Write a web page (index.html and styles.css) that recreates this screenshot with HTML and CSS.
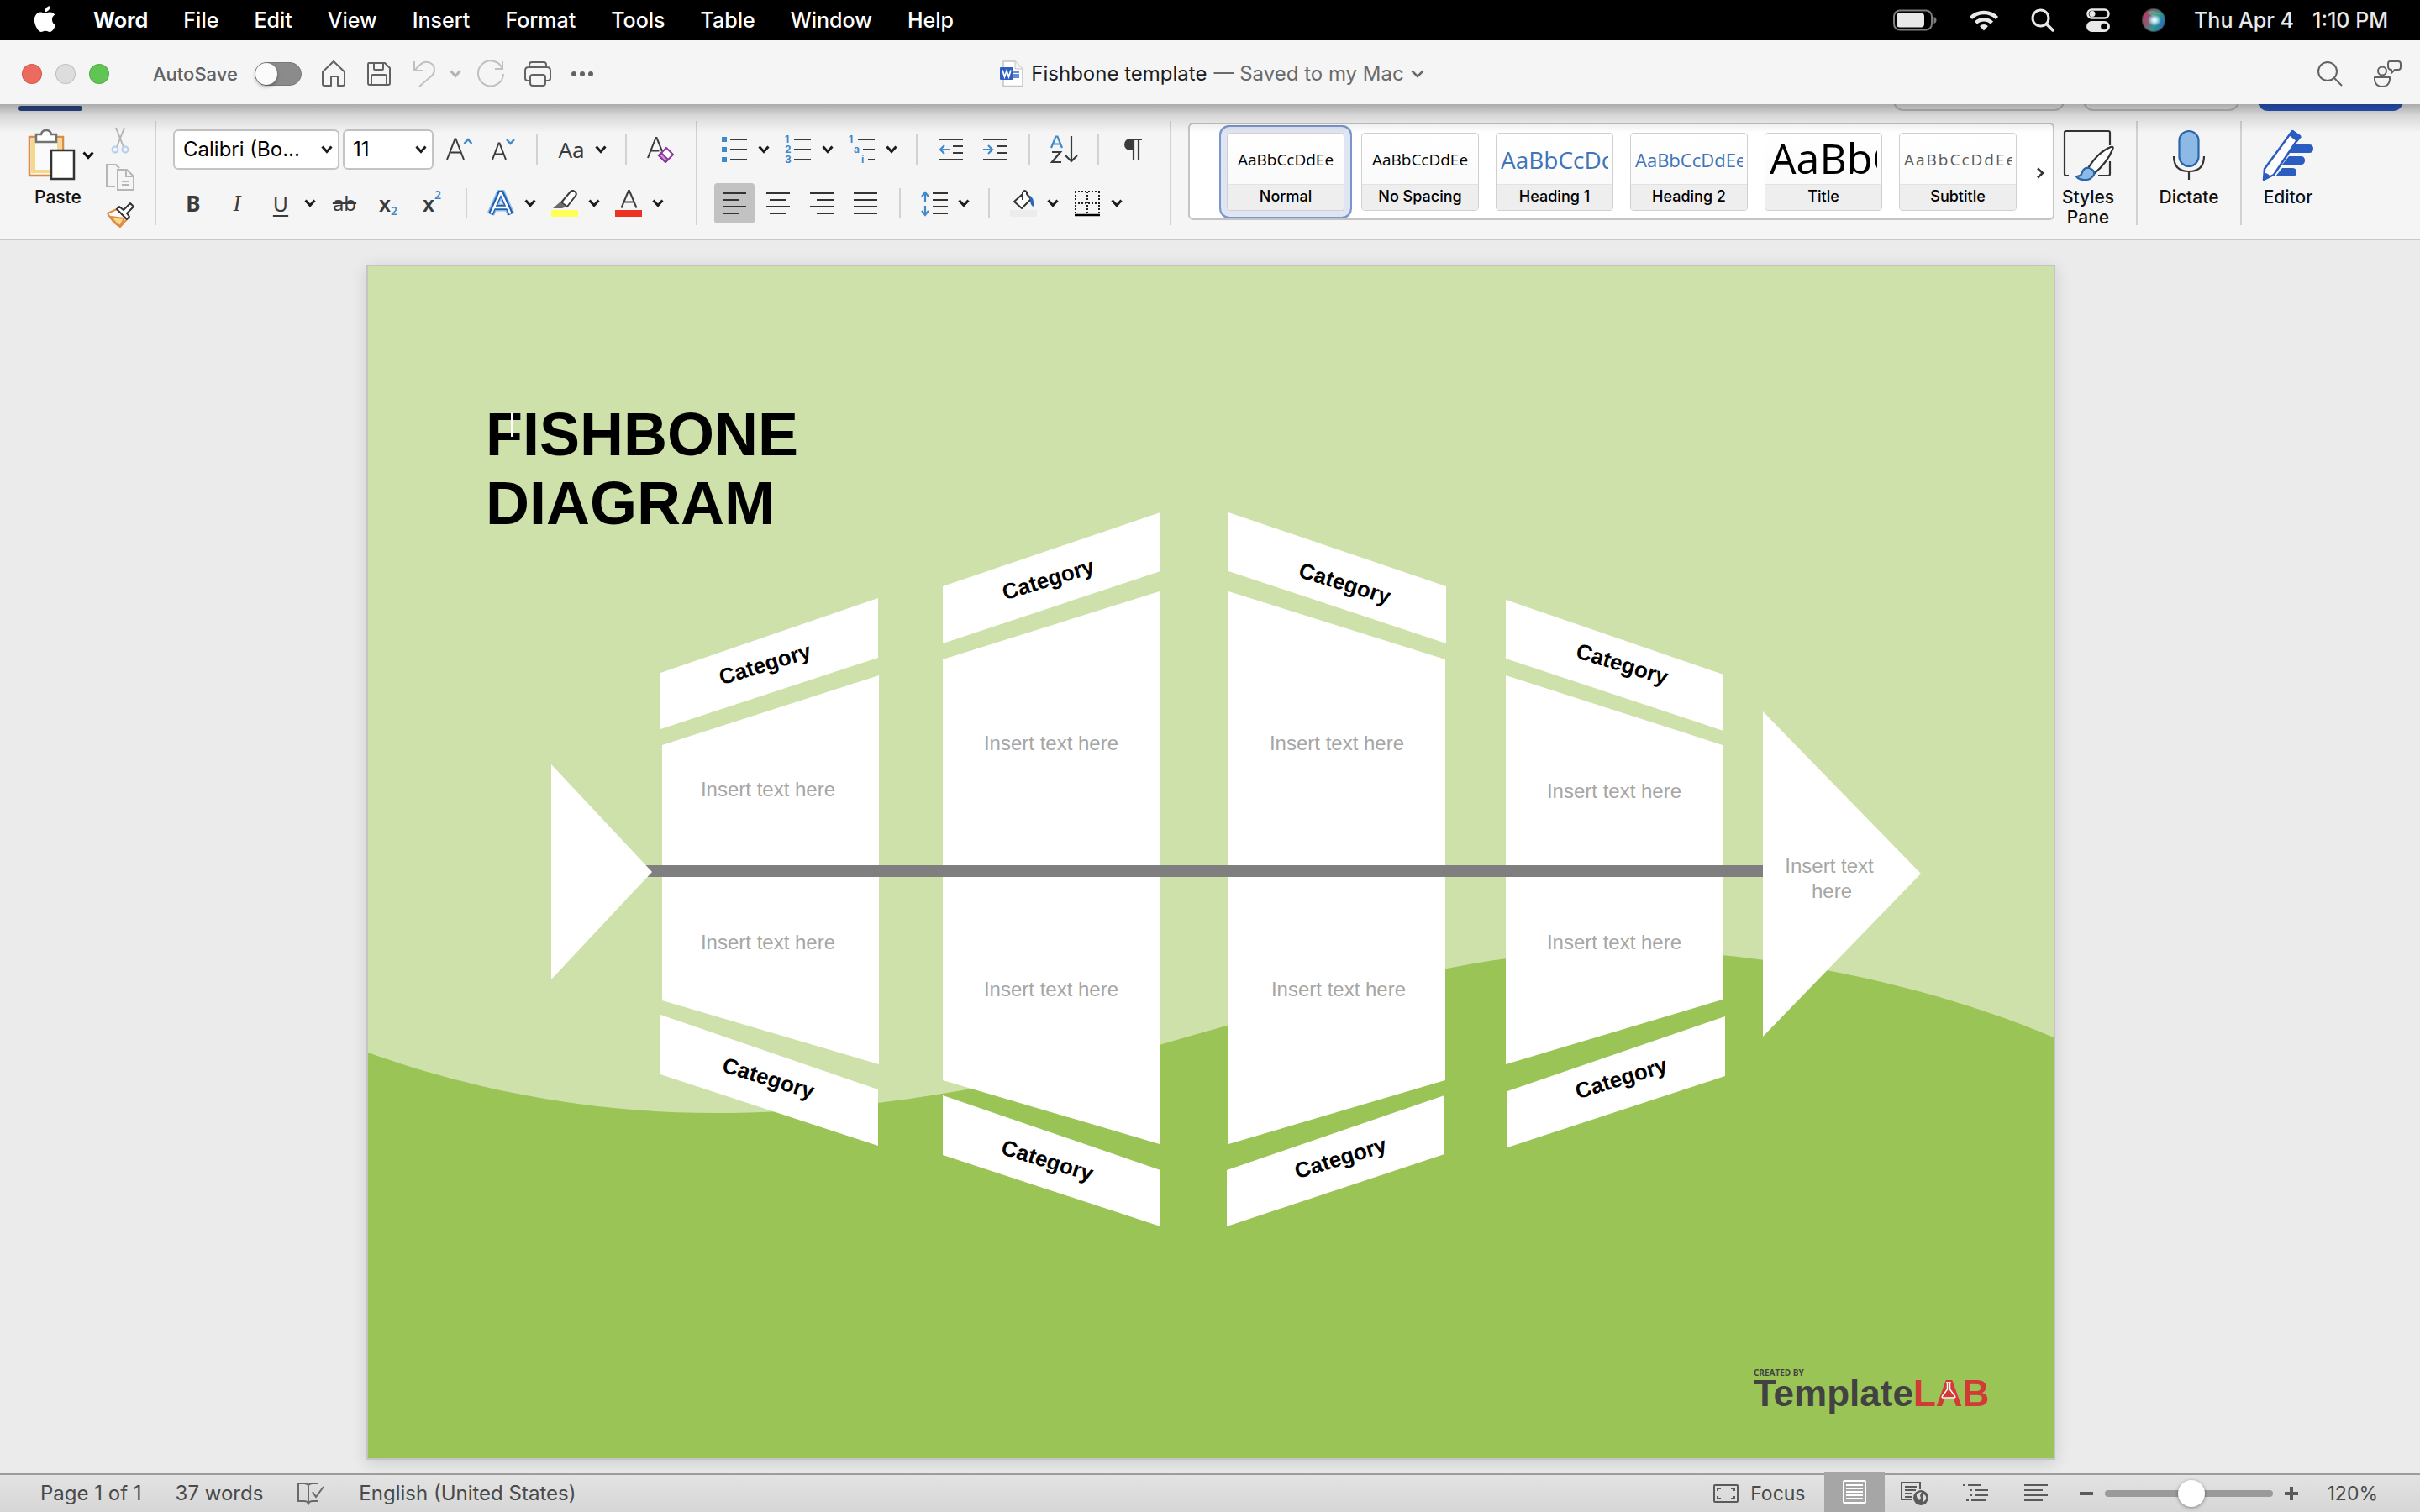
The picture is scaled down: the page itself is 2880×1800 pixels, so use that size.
FILE: index.html
```html
<!DOCTYPE html>
<html lang="en">
<head>
<meta charset="utf-8">
<title>Fishbone template</title>
<link rel="stylesheet" href="styles.css">
</head>
<body>
<svg class="defs" aria-hidden="true">
  <symbol id="chev" viewBox="0 0 14 10"><path d="M1.500 1.500 7 7.500l5.500-6" fill="none" stroke="currentColor" stroke-width="3"/></symbol>
</svg>

<nav class="menubar" aria-label="Menu bar">
  <button class="apple" aria-label="Apple"><svg width="31" height="31" viewBox="0 0 24 24" fill="#fff"><path d="M12.152 6.896c-.948 0-2.415-1.078-3.96-1.04-2.04.027-3.91 1.183-4.961 3.014-2.117 3.675-.546 9.103 1.519 12.09 1.013 1.454 2.208 3.09 3.792 3.039 1.52-.065 2.09-.987 3.935-.987 1.831 0 2.35.987 3.96.948 1.637-.026 2.676-1.48 3.676-2.948 1.156-1.688 1.636-3.325 1.662-3.415-.039-.013-3.182-1.221-3.22-4.857-.026-3.04 2.48-4.494 2.597-4.559-1.429-2.09-3.623-2.324-4.39-2.376-2-.156-3.675 1.09-4.61 1.09zM15.53 3.83c.843-1.012 1.4-2.427 1.245-3.83-1.207.052-2.662.805-3.532 1.818-.78.896-1.454 2.338-1.273 3.714 1.338.104 2.715-.688 3.559-1.701"/></svg></button>
  <button class="app-name">Word</button>
  <button>File</button>
  <button>Edit</button>
  <button>View</button>
  <button>Insert</button>
  <button>Format</button>
  <button>Tools</button>
  <button>Table</button>
  <button>Window</button>
  <button>Help</button>
  <div class="tray">
    <svg width="52" height="26" viewBox="0 0 52 26"><rect x="1" y="1.500" width="45" height="23" rx="7" fill="none" stroke="#7d7d7d" stroke-width="2"/><rect x="4" y="4.500" width="33" height="17" rx="4" fill="#e8e8e8"/><path d="M48.500 9v8q3-1 3-4t-3-4z" fill="#7d7d7d"/></svg>
    <svg width="36" height="26" viewBox="0 0 36 26" fill="none" stroke="#e8e8e8" stroke-width="4.500"><path d="M2.500 10.500a22 22 0 0 1 31 0M8.500 16.200a13.500 13.500 0 0 1 19 0"/><path d="M18 25.500l-5-5.500a7.500 7.500 0 0 1 10 0z" fill="#e8e8e8" stroke="none"/></svg>
    <svg width="28" height="28" viewBox="0 0 28 28" fill="none" stroke="#e8e8e8" stroke-width="3"><circle cx="11.500" cy="11.500" r="9.500"/><path d="M18.500 18.500l7.500 7.500" stroke-width="3.500" stroke-linecap="round"/></svg>
    <svg width="28" height="28" viewBox="0 0 28 28"><rect x="1.500" y="1.500" width="25" height="10" rx="5" fill="none" stroke="#e8e8e8" stroke-width="2.500"/><circle cx="7" cy="6.500" r="3.500" fill="#e8e8e8"/><rect x="0" y="15" width="28" height="13" rx="6.500" fill="#e8e8e8"/><circle cx="21" cy="21.500" r="3.800" fill="#000"/></svg>
    <svg width="28" height="28" viewBox="0 0 28 28"><defs><linearGradient id="siri" x1="0" y1=".3" x2="1" y2=".8"><stop offset="0" stop-color="#c8315c"/><stop offset=".4" stop-color="#6d6f7e"/><stop offset=".6" stop-color="#2f9a8e"/><stop offset="1" stop-color="#2a62c8"/></linearGradient><radialGradient id="glow"><stop offset="0" stop-color="#fff"/><stop offset=".35" stop-color="#bfe9f5"/><stop offset="1" stop-color="#bfe9f5" stop-opacity="0"/></radialGradient></defs><circle cx="14" cy="14" r="14" fill="#3a4a4c"/><circle cx="14" cy="14" r="13" fill="url(#siri)"/><path d="M6 5q9-5 16 3-6-2-10 1z" fill="#4fb98c" opacity=".7"/><ellipse cx="15" cy="14" rx="8" ry="7" fill="url(#glow)"/></svg>
    <time class="clock"><span>Thu Apr 4</span><span>1:10 PM</span></time>
  </div>
</nav>

<header class="titlebar">
  <div class="title-start">
    <div class="lights"><button class="light red" aria-label="Close"></button><button class="light gray" aria-label="Minimise"></button><button class="light green" aria-label="Zoom window"></button></div>
    <div class="quick">
      <label class="autosave">AutoSave <input type="checkbox" role="switch" class="switch"></label>
      <button aria-label="Home"><svg width="32" height="32" viewBox="0 0 32 32" fill="none" stroke="#626262" stroke-width="2" stroke-linejoin="round"><path d="M3 13.500 16 1l13 12.500V28q0 2-2 2h-6V19h-8v11H5q-2 0-2-2z"/></svg></button>
      <button aria-label="Save"><svg width="32" height="32" viewBox="0 0 32 32" fill="none" stroke="#626262" stroke-width="2" stroke-linejoin="round"><path d="M4 3h19l6 6v18q0 2-2 2H5q-2 0-2-2V5q0-2 1-2zM10 3v7q0 1 1 1h9q1 0 1-1V3M7 29V19q0-2 2-2h14q2 0 2 2v10"/></svg></button>
      <div class="undo"><button aria-label="Undo"><svg width="32" height="32" viewBox="0 0 32 32" fill="none" stroke="#c0c0c0" stroke-width="2"><path d="M4 1v11h11M4 12l7-7C17-1 28 2 28 11c0 3-1 5-3 7L10 31"/></svg></button><button class="pale" aria-label="Undo history"><svg width="14" height="10"><use href="#chev"/></svg></button></div>
      <button aria-label="Redo"><svg width="34" height="34" viewBox="0 0 34 34" fill="none" stroke="#c0c0c0" stroke-width="2"><path d="M31 2v9h-9M31 11A15 15 0 1 0 32 17"/></svg></button>
      <button aria-label="Print"><svg width="34" height="32" viewBox="0 0 34 32" fill="none" stroke="#626262" stroke-width="2"><path d="M8 24H5q-3 0-3-3v-9q0-4 4-4h22q4 0 4 4v9q0 3-3 3h-3M7 8V5q0-3 3-3h14q3 0 3 3v3"/><rect x="8" y="17" width="18" height="13" rx="3"/></svg></button>
      <button aria-label="More"><svg width="28" height="8" viewBox="0 0 28 8" fill="#626262"><circle cx="4" cy="4" r="3"/><circle cx="14" cy="4" r="3"/><circle cx="24" cy="4" r="3"/></svg></button>
    </div>
  </div>
  <button class="doc-title">
    <svg width="30" height="32" viewBox="0 0 30 32"><path d="M5 1h14l9 9v20.500H5z" fill="#fff" stroke="#c4c4c4" stroke-width="1.500"/><path d="M19 1v9h9" fill="#f2f2f2" stroke="#c4c4c4"/><path d="M16 14h8m-8 3h8m-8 3h8" stroke="#3469c8" stroke-width="1.500"/><rect x="1" y="8" width="16" height="15" rx="1" fill="#2f5fc4"/><path d="M4 11.500l2.500 8L9 12.500l2.500 7 2.500-8" fill="none" stroke="#fff" stroke-width="1.800"/></svg>
    <span>Fishbone template</span><span class="saved">— Saved to my Mac</span>
    <svg class="saved" width="16" height="12" viewBox="0 0 16 12"><path d="M1.500 2.500 8 9l6.500-6.500" fill="none" stroke="currentColor" stroke-width="2.500"/></svg>
  </button>
  <div class="title-tools">
    <button aria-label="Search"><svg width="30" height="30" viewBox="0 0 30 30" fill="none" stroke="#626262" stroke-width="2"><circle cx="12" cy="12" r="11"/><path d="M20 20l9 9"/></svg></button>
    <button aria-label="Share"><svg width="34" height="34" viewBox="0 0 34 34" fill="none" stroke="#626262" stroke-width="2"><circle cx="11" cy="13.500" r="5"/><path d="M2 21h18v3q-1 8-9 8t-9-8zM20 2h10q3 0 3 3v4q0 3-3 3h-4l-4 4v-4q-4 0-4-4V5q0-3 2-3z" stroke-linejoin="round"/></svg></button>
  </div>
</header>

<div class="tabs" aria-hidden="true"><i class="tab-mark"></i><i class="pill one"></i><i class="pill two"></i><i class="pill share"></i></div>

<section class="ribbon" aria-label="Home">
  <div class="group clipboard">
    <button class="big paste">
      <span class="paste-icon"><svg width="58" height="62" viewBox="0 0 58 62"><path d="M12 9H2v46h24" fill="none" stroke="#e08a42" stroke-width="2.500"/><path d="M30 9h12v16" fill="none" stroke="#e08a42" stroke-width="2.500"/><path d="M4 11h36v13H27v28H4z" fill="#f4d98b"/><path d="M9 15h26v9h-9v24H9z" fill="#fafafa"/><path d="M10 6h6q1-5 6-5t6 5h6v9H10z" fill="#fff" stroke="#737373" stroke-width="2.500"/><rect x="28" y="25" width="27" height="34" fill="#fff" stroke="#333" stroke-width="2.500"/></svg><svg width="14" height="10"><use href="#chev"/></svg></span>
      <span>Paste</span>
    </button>
    <div class="stack">
      <button aria-label="Cut"><svg width="34" height="34" viewBox="0 0 34 34" fill="none" stroke-width="2"><path d="M12 2l9 23M22 2l-9 23" stroke="#b6b6b6"/><circle cx="11" cy="28" r="3.500" stroke="#afcfec"/><circle cx="23" cy="28" r="3.500" stroke="#afcfec"/></svg></button>
      <button aria-label="Copy"><svg width="34" height="34" viewBox="0 0 34 34" fill="none" stroke="#b6b6b6" stroke-width="2"><path d="M11 28H1V2h11l4 4M14 8h11l8 8v16H14zM24 8v8h9M19 22h9M19 26h9"/></svg></button>
      <button aria-label="Format painter"><svg width="34" height="34" viewBox="0 0 34 34" stroke-linejoin="round" stroke-width="2"><path d="M2 16l11-5 12 12-8 9q-8-4-15-16z" fill="#fff" stroke="#e08a42"/><path d="M6 20l16 2-5 9q-6-3-11-11z" fill="#f4d98b" stroke="#e08a42"/><path d="M13 11l3-3 5 4 8-8 4 4-8 8 3 4-3 3z" fill="#fff" stroke="#333"/></svg></button>
    </div>
  </div>

  <div class="group font">
    <div class="row">
      <div class="combos">
        <span class="combo"><select class="face" aria-label="Font"><option>Calibri (Bo...</option></select><svg width="14" height="10"><use href="#chev"/></svg></span>
        <span class="combo"><select class="size" aria-label="Font size"><option>11</option></select><svg width="14" height="10"><use href="#chev"/></svg></span>
      </div>
      <div class="tools">
        <button class="tool" aria-label="Increase font size"><svg width="32" height="32" viewBox="0 0 32 32"><path d="M2 28 11.500 3.500h1L22 28M5.500 19.500h13" fill="none" stroke="#3b3b3b" stroke-width="2"/><path d="M22.500 9l4.500-5 4.500 5" fill="none" stroke="#3f8acb" stroke-width="2.500"/></svg></button>
        <button class="tool" aria-label="Decrease font size"><svg width="32" height="32" viewBox="0 0 32 32"><path d="M4 28l7.500-19.500h1L20 28M7 21.500h10" fill="none" stroke="#3b3b3b" stroke-width="2"/><path d="M21 4l4.500 5L30 4" fill="none" stroke="#3f8acb" stroke-width="2.500"/></svg></button>
        <i class="rule"></i>
        <div class="split"><button class="tool case">Aa</button><button aria-label="Case options"><svg width="14" height="10"><use href="#chev"/></svg></button></div>
        <i class="rule"></i>
        <button class="tool" aria-label="Clear formatting"><svg width="32" height="32" viewBox="0 0 32 32"><path d="M1 26 10.500 2h1L18 18M4.500 17.500h10" fill="none" stroke="#3b3b3b" stroke-width="2"/><path d="M23 14l8 8-9 9-8-8z" fill="#fff" stroke="#8b3a9c" stroke-width="2"/><path d="M17 20l8 8-3 3-8-8z" fill="#cf9ad8" stroke="#8b3a9c" stroke-width="2"/></svg></button>
      </div>
    </div>
    <div class="row tools lower">
      <button class="tool bold">B</button>
      <button class="tool italic">I</button>
      <div class="split"><button class="tool underline">U</button><button aria-label="Underline options"><svg width="14" height="10"><use href="#chev"/></svg></button></div>
      <button class="tool strike">ab</button>
      <button class="tool script">x<sub>2</sub></button>
      <button class="tool script">x<sup>2</sup></button>
      <i class="rule"></i>
      <div class="split"><button class="tool" aria-label="Text effects"><svg width="34" height="32" viewBox="0 0 34 32" fill="none"><path d="M5 29 16 4h2l11 25M10 21h14" stroke="#8fbce8" stroke-width="9"/><path d="M5 29 16 4h2l11 25M10 21h14" stroke="#1f5fb0" stroke-width="6"/><path d="M5.500 28.500 16.500 4h1l11 24.500M9 21h16" stroke="#fff" stroke-width="2.500"/></svg></button><button aria-label="Text effects options"><svg width="14" height="10"><use href="#chev"/></svg></button></div>
      <div class="split"><button class="tool" aria-label="Highlight"><svg width="32" height="32" viewBox="0 0 32 32"><path d="M12 15 23 2q2-2 5 0t1 5L19 20z" fill="#fff" stroke="#3b3b3b" stroke-width="2"/><path d="M2 22l8-7 8 5-5 2z" fill="#6a6a6a"/><path d="M0 24h32v8H0z" fill="#ff5"/></svg></button><button aria-label="Highlight options"><svg width="14" height="10"><use href="#chev"/></svg></button></div>
      <div class="split"><button class="tool" aria-label="Font colour"><svg width="32" height="32" viewBox="0 0 32 32"><path d="M7.500 21.500 16 1h1l8.500 20.500M11 14.500h11" fill="none" stroke="#3b3b3b" stroke-width="2"/><path d="M0 24h32v8H0z" fill="#ea3323"/></svg></button><button aria-label="Font colour options"><svg width="14" height="10"><use href="#chev"/></svg></button></div>
    </div>
  </div>

  <div class="group para">
    <div class="row tools">
      <div class="split"><button class="tool" aria-label="Bullets"><svg width="32" height="32" viewBox="0 0 32 32"><path d="M1 1h6v6H1zM1 13h6v6H1zM1 25h6v6H1z" fill="#3f8acb"/><path d="M11 4h20M11 16h20M11 28h20" stroke="#3b3b3b" stroke-width="2"/></svg></button><button aria-label="Bullet options"><svg width="14" height="10"><use href="#chev"/></svg></button></div>
      <div class="split"><button class="tool" aria-label="Numbering"><svg class="digits" width="32" height="32" viewBox="0 0 32 32"><text x="0" y="8">1</text><text x="0" y="20">2</text><text x="0" y="32">3</text><path d="M11 4h20M11 16h20M11 28h20" stroke="#3b3b3b" stroke-width="2"/></svg></button><button aria-label="Numbering options"><svg width="14" height="10"><use href="#chev"/></svg></button></div>
      <div class="split"><button class="tool" aria-label="Multilevel list"><svg class="digits" width="32" height="32" viewBox="0 0 32 32"><text x="0" y="8">1</text><text x="6" y="20">a</text><text x="15" y="32">i</text><path d="M11 4h20M17 16h14M23 28h8" stroke="#3b3b3b" stroke-width="2"/></svg></button><button aria-label="Multilevel options"><svg width="14" height="10"><use href="#chev"/></svg></button></div>
      <i class="rule"></i>
      <button class="tool" aria-label="Decrease indent"><svg width="32" height="32" viewBox="0 0 32 32" fill="none" stroke="#3b3b3b" stroke-width="2"><path d="M2 4h28M18 12h12M18 20h12M2 28h28"/><path d="M14 16H3m5-5-5 5 5 5" stroke="#3f8acb" stroke-width="2.200"/></svg></button>
      <button class="tool" aria-label="Increase indent"><svg width="32" height="32" viewBox="0 0 32 32" fill="none" stroke="#3b3b3b" stroke-width="2"><path d="M2 4h28M18 12h12M18 20h12M2 28h28"/><path d="M2 16h11m-5-5 5 5-5 5" stroke="#3f8acb" stroke-width="2.200"/></svg></button>
      <i class="rule"></i>
      <button class="tool" aria-label="Sort"><svg width="34" height="34" viewBox="0 0 34 34" fill="none" stroke-width="2.200"><path d="M2 15 7.500 1.500h2L15 15M4 10.500h9" stroke="#3f8acb"/><path d="M3 20h10L3 32h11M26 1v30m-7-7 7 7 7-7" stroke="#3b3b3b"/></svg></button>
      <i class="rule"></i>
      <button class="tool" aria-label="Show formatting marks"><svg width="24" height="26" viewBox="0 0 24 26"><path d="M10 1h13M13 1v24M19 1v24" stroke="#3b3b3b" stroke-width="2.200"/><path d="M13 0v14H9A7 7 0 0 1 9 0z" fill="#3b3b3b"/></svg></button>
    </div>
    <div class="row tools">
      <button class="tool active" aria-label="Align left"><svg width="32" height="32" viewBox="0 0 32 32"><path d="M2 4h28M2 12h20M2 20h28M2 28h20" stroke="#333" stroke-width="2"/></svg></button>
      <button class="tool" aria-label="Centre"><svg width="32" height="32" viewBox="0 0 32 32"><path d="M2 4h28M6 12h20M2 20h28M6 28h20" stroke="#333" stroke-width="2"/></svg></button>
      <button class="tool" aria-label="Align right"><svg width="32" height="32" viewBox="0 0 32 32"><path d="M2 4h28M10 12h20M2 20h28M10 28h20" stroke="#333" stroke-width="2"/></svg></button>
      <button class="tool" aria-label="Justify"><svg width="32" height="32" viewBox="0 0 32 32"><path d="M2 4h28M2 12h28M2 20h28M2 28h28" stroke="#333" stroke-width="2"/></svg></button>
      <i class="rule"></i>
      <div class="split"><button class="tool" aria-label="Line spacing"><svg width="32" height="32" viewBox="0 0 32 32" fill="none"><path d="M14 4h18M14 12h18M14 20h18M14 28h18" stroke="#333" stroke-width="2"/><path d="M5 14V4M1 8l4-5 4 5M5 19v10M1 25l4 5 4-5" stroke="#3f8acb" stroke-width="2.200"/></svg></button><button aria-label="Line spacing options"><svg width="14" height="10"><use href="#chev"/></svg></button></div>
      <i class="rule"></i>
      <div class="split"><button class="tool" aria-label="Shading"><svg width="32" height="32" viewBox="0 0 32 32"><path d="M15 5 5 14l9 8 11-11-5-6V3q-2-4-5 0v9" fill="#fff" stroke="#333" stroke-width="2" stroke-linejoin="round"/><path d="M22 6q7 2 6 14-4-1-4-9z" fill="#2b66b8"/><path d="M0 24h32v8H0z" fill="#ececec"/></svg></button><button aria-label="Shading options"><svg width="14" height="10"><use href="#chev"/></svg></button></div>
      <div class="split"><button class="tool" aria-label="Borders"><svg width="32" height="32" viewBox="0 0 32 32" fill="none" stroke="#222" stroke-width="2"><path d="M1 2h30M1 16h30M2 2v26M16 2v26M30 2v26" stroke-dasharray="2 2"/><path d="M1 30h30" stroke="#000" stroke-width="2.500"/></svg></button><button aria-label="Border options"><svg width="14" height="10"><use href="#chev"/></svg></button></div>
    </div>
  </div>

  <div class="group styles">
    <div class="gallery">
      <button class="style selected"><span class="sample">AaBbCcDdEe</span><span class="name">Normal</span></button>
      <button class="style"><span class="sample">AaBbCcDdEe</span><span class="name">No Spacing</span></button>
      <button class="style"><span class="sample h1">AaBbCcDdEe</span><span class="name">Heading 1</span></button>
      <button class="style"><span class="sample h2">AaBbCcDdEe</span><span class="name">Heading 2</span></button>
      <button class="style"><span class="sample title">AaBbCcDdEe</span><span class="name">Title</span></button>
      <button class="style"><span class="sample subtitle">AaBbCcDdEe</span><span class="name">Subtitle</span></button>
      <button class="next" aria-label="More styles"><svg width="10" height="14" viewBox="0 0 10 14"><path d="M2 1.500 8 7l-6 5.500" fill="none" stroke="#333" stroke-width="2.500"/></svg></button>
    </div>
    <button class="big pane"><svg width="62" height="62" viewBox="0 0 62 62" fill="none"><path d="M8 55H5q-2 0-2-2V4q0-2 2-2h50q2 0 2 2v15M57 38v15q0 2-2 2H43" stroke="#333" stroke-width="2.200"/><path d="M31 46Q44 26 58 21q4-1 2 3-6 15-21 28z" fill="#fff" stroke="#333" stroke-width="2.200"/><path d="M17 56q6 0 7-5 2-6 8-5 7 2 6 8-4 7-12 6-6 0-9-4z" fill="#8db9e6" stroke="#2b66a8" stroke-width="2.200"/></svg><span>Styles<br>Pane</span></button>
  </div>
  <div class="group dictate"><button class="big"><svg width="40" height="62" viewBox="0 0 40 62" fill="none" stroke-width="2.200"><rect x="8.500" y="2" width="23" height="42" rx="11.500" fill="#8db9e6" stroke="#2b66a8"/><path d="M2 32q0 18 18 18t18-18M20 50v10" stroke="#333"/></svg><span>Dictate</span></button></div>
  <div class="group editor"><button class="big"><svg width="62" height="62" viewBox="0 0 62 62"><path d="M38 18h18q5 0 5 5t-5 5H32M32 32h14q5 0 5 5t-5 5H24M24 46h12q5 0 5 5t-5 5H16" fill="#2b5cc0"/><path d="M3 47 36 2l9 6L14 54 2 60z" fill="#fff" stroke="#2b5cc0" stroke-width="2.500" stroke-linejoin="round"/><path d="M32 7l5-6 10 8-5 6zM1 61l2-9q5 0 7 5z" fill="#2b5cc0"/></svg><span>Editor</span></button></div>
</section>

<main class="workspace">
  <article class="page">
    <svg class="canvas" viewBox="438 317 2006 1419">
      <rect x="438" y="317" width="2006" height="1419" fill="#cee1aa"/>
      <path d="M438 1253C560 1297 700 1325 850 1325C1050 1325 1240 1285 1421 1232C1600 1180 1760 1131 1930 1131C2100 1131 2290 1170 2444 1235V1736H438Z" fill="#9ac456"/>
      <g class="heading"><text x="578" y="542">FISHBONE</text><text x="578" y="624">DIAGRAM</text></g>
      <path d="M609 490v30" stroke="#fff" stroke-width="2"/>
      <g fill="#fff">
        <path d="M786 801 1045 712V783L786 868zM788 887 1046 804V1267L788 1191zM786 1208 1045 1297V1364L786 1279z"/>
        <path d="M1122 698 1381 610V680L1122 766zM1122 785 1380 704V1362L1122 1286zM1122 1304 1381 1393V1460L1122 1375z"/>
        <path d="M1462 610 1721 698V766L1462 680zM1462 704 1720 785V1286L1462 1362zM1460 1393 1719 1304V1374L1460 1460z"/>
        <path d="M1792 714 2051 803V870L1792 784zM1792 804 2050 887V1190L1792 1267zM1794 1299 2053 1210V1281L1794 1366z"/>
      </g>
      <path d="M760 1030H2100V1044H760z" fill="#7f7f7f"/>
      <path d="M656 910 776 1038 656 1166zM2098 847 2286 1040 2098 1234z" fill="#fff"/>
      <g class="category">
        <text transform="translate(913 799) rotate(-17)">Category</text>
        <text transform="translate(1250 698) rotate(-17)">Category</text>
        <text transform="translate(1598 703) rotate(17)">Category</text>
        <text transform="translate(1928 799) rotate(17)">Category</text>
        <text transform="translate(912 1292) rotate(17)">Category</text>
        <text transform="translate(1244 1390) rotate(17)">Category</text>
        <text transform="translate(1598 1387) rotate(-17)">Category</text>
        <text transform="translate(1932 1292) rotate(-17)">Category</text>
      </g>
      <g class="entry">
        <text x="914" y="948">Insert text here</text>
        <text x="914" y="1130">Insert text here</text>
        <text x="1251" y="893">Insert text here</text>
        <text x="1251" y="1186">Insert text here</text>
        <text x="1591" y="893">Insert text here</text>
        <text x="1593" y="1186">Insert text here</text>
        <text x="1921" y="950">Insert text here</text>
        <text x="1921" y="1130">Insert text here</text>
        <text x="2177" y="1039">Insert text</text>
        <text x="2180" y="1069">here</text>
      </g>
      <g class="brand">
        <text class="tiny" x="2087" y="1638">CREATED BY</text>
        <text x="2087" y="1674">Template<tspan fill="#d23a35">LAB</tspan></text>
        <path d="M2316 1646h6M2317.500 1646v8l-6 8q-1 2 1 2h13q2 0 1-2l-6-8v-8" fill="#d23a35" stroke="#fff" stroke-width="1.500"/>
      </g>
    </svg>
  </article>
</main>

<footer class="status">
  <span>Page 1 of 1</span>
  <span>37 words</span>
  <button aria-label="Proofing"><svg width="34" height="28" viewBox="0 0 34 28" fill="none" stroke="#6a6a6a" stroke-width="2"><path d="M14 4q-2-2-5-2H2v21h7q4 0 5 3 1-3 5-3h6M14 26V4q2-2 5-2h6M19 12l4 6 9-12"/></svg></button>
  <button class="lang">English (United States)</button>
  <div class="views">
    <button class="focus"><svg width="32" height="24" viewBox="0 0 32 24" fill="none" stroke="#5a5a5a" stroke-width="2"><rect x="2" y="2" width="28" height="20" rx="1"/><path d="M6 9V6h4M22 6h4v3M26 15v3h-4M10 18H6v-3"/></svg>Focus</button>
    <button class="view on" aria-label="Print layout"><svg width="28" height="28" viewBox="0 0 28 28"><rect x="1" y="1" width="26" height="26" rx="1" fill="none" stroke="#fff" stroke-width="2"/><path d="M4 6h20M4 10h20M4 14h20M4 18h20M4 22h20" stroke="#fff" stroke-width="2"/></svg></button>
    <button class="view" aria-label="Web layout"><svg width="34" height="28" viewBox="0 0 34 28" fill="none" stroke="#5a5a5a" stroke-width="2"><path d="M14 21H1V1h22v8M5 6h14M5 10h13M5 14h9M5 18h8"/><circle cx="24" cy="19" r="9" fill="#5a5a5a" stroke="none"/><path d="M19 15q3-3 6-3l-2 4 1 4-2 2q-4-3-3-7zM27 15q4 1 3 6l-3 3z" fill="#dcdcdc" stroke="none"/></svg></button>
    <button class="view" aria-label="Outline"><svg width="32" height="24" viewBox="0 0 32 24" stroke="#5a5a5a" stroke-width="2"><path d="M1 2h3M7 2h16M9 8h3M15 8h16M9 14h3M15 14h16M5 20h3M11 20h17"/></svg></button>
    <button class="view" aria-label="Draft"><svg width="30" height="24" viewBox="0 0 30 24" stroke="#5a5a5a" stroke-width="2"><path d="M1 2h28M1 8h22M1 14h28M1 20h22"/></svg></button>
    <div class="zoom">
      <button aria-label="Zoom out"><svg width="18" height="18" viewBox="0 0 18 18"><path d="M1 9h16" stroke="#5a5a5a" stroke-width="4"/></svg></button>
      <input type="range" min="0" max="100" value="52" aria-label="Zoom">
      <button aria-label="Zoom in"><svg width="18" height="18" viewBox="0 0 18 18"><path d="M1 9h16M9 1v16" stroke="#5a5a5a" stroke-width="4"/></svg></button>
    </div>
    <button class="percent">120%</button>
  </div>
</footer>
</body>
</html>
```

FILE: styles.css
```css
* { box-sizing: border-box; }

body {
  margin: 0;
  min-height: 100vh;
  display: flex;
  flex-direction: column;
  background: #ebebeb;
  font: 24px/32px Inter, "Liberation Sans", sans-serif;
  color: #000;
}

button {
  display: flex;
  align-items: center;
  justify-content: center;
  flex: none;
  padding: 0;
  border: 0;
  background: none;
  font: inherit;
  color: inherit;
  white-space: nowrap;
}

svg { display: block; flex: none; }
.defs { position: absolute; width: 0; height: 0; }

/* System menu bar */
.menubar {
  display: flex;
  align-items: center;
  gap: 42px;
  height: 48px;
  padding: 0 38px;
  background: #000;
  color: #fff;
  font-size: 25px;
  font-weight: 500;
}
.apple { padding-bottom: 3px; }
.app-name { font-weight: 700; }
.tray {
  display: flex;
  align-items: center;
  gap: 38px;
  margin-left: auto;
  color: #e8e8e8;
}
.clock { display: flex; gap: 22px; margin-left: -4px; }

/* Window title bar */
.titlebar {
  position: relative;
  display: grid;
  grid-template-columns: 1fr auto 1fr;
  align-items: center;
  height: 76px;
  padding: 4px 22px 0 26px;
  background: #f5f5f5;
}
.titlebar::after {
  content: "";
  position: absolute;
  z-index: 2;
  top: 100%;
  left: 0;
  right: 0;
  height: 34px;
  background: linear-gradient(rgba(0, 0, 0, .3), rgba(0, 0, 0, .12) 40%, rgba(0, 0, 0, 0));
  pointer-events: none;
}
.title-start { display: flex; align-items: center; }
.lights { display: flex; gap: 16px; }
.light { width: 24px; height: 24px; border-radius: 50%; border: 1px solid #0002; }
.red { background: #ed6a5e; }
.gray { background: #dddddd; }
.green { background: #61c554; }
.quick { display: flex; align-items: center; gap: 22px; padding-left: 52px; }
.autosave {
  display: flex;
  align-items: center;
  gap: 20px;
  font-size: 22px;
  font-weight: 500;
  color: #626262;
}
.switch {
  appearance: none;
  width: 56px;
  height: 28px;
  margin: 0;
  border-radius: 14px;
  background: #8b8b8b;
  border: 1px solid #777;
}
.switch::before {
  content: "";
  display: block;
  width: 26px;
  height: 26px;
  border-radius: 50%;
  background: #fbfbfb;
  box-shadow: 0 2px 4px #0005;
}
.undo { display: flex; align-items: center; gap: 14px; }
.undo + button { margin-left: -4px; }
.pale { color: #b4b4b4; }
.doc-title { gap: 8px; color: #1e1e1e; }
.saved { color: #6a6a6a; }
.title-tools { display: flex; justify-content: flex-end; gap: 36px; }

/* Lower edge of the tab strip, tucked under the title bar */
.tabs {
  display: flex;
  height: 8px;
  padding: 0 20px 0 22px;
  gap: 22px;
  background: #f5f5f5;
  overflow: hidden;
}
.tab-mark { width: 76px; height: 6px; margin: 2px auto 0 0; border-radius: 3px; background: #2b4a8c; }
.pill { height: 24px; margin-top: -16px; border-radius: 12px; border: 2px solid #c6c6c6; }
.one { width: 204px; }
.two { width: 186px; }
.share { width: 173px; border: 0; background: #2b5cc8; }

/* Ribbon */
.ribbon {
  display: flex;
  height: 154px;
  padding: 12px 0 16px;
  background: #f5f5f5;
  border-bottom: 2px solid #c8c8c8;
  color: #1c1c1c;
}
.group { display: flex; flex: none; padding-top: 10px; border-left: 2px solid #d2d2d2; height: 124px; }
.clipboard { border: 0; width: 184px; padding-left: 33px; gap: 14px; }
.big {
  display: flex;
  flex-direction: column;
  justify-content: flex-start;
  align-self: flex-start;
  gap: 7px;
  font-size: 21px;
  line-height: 24px;
  font-weight: 500;
  color: #111;
}
.paste { align-items: flex-start; }
.paste > span:last-child { padding-left: 8px; }
.paste-icon { display: flex; align-items: center; gap: 7px; }
.stack { display: flex; flex-direction: column; gap: 10px; margin-top: -4px; }

.font { flex-direction: column; gap: 16px; padding-left: 20px; width: 644px; }
.para { flex-direction: column; gap: 16px; padding-left: 26px; width: 564px; }
.row { display: flex; align-items: center; height: 48px; gap: 12px; }
.tools { display: flex; align-items: center; gap: 16px; }
.tools.row { gap: 16px; }
.lower { padding-left: 6px; }
.tool { width: 36px; height: 36px; color: #3b3b3b; }
.split { display: flex; align-items: center; gap: 10px; }
.rule { width: 2px; height: 36px; margin: 0 6px; background: #d2d2d2; }
.active { background: #c2c2c2; box-shadow: 0 0 0 6px #c2c2c2; border-radius: 1px; }
.combos { display: flex; gap: 4px; }
.combo { display: grid; align-items: center; }
.combo > * { grid-area: 1 / 1; }
.combo svg { justify-self: end; margin-right: 8px; pointer-events: none; }
.combo select {
  appearance: none;
  height: 48px;
  padding: 0 10px;
  border: 2px solid #c4c4c4;
  border-radius: 6px;
  background: #fff;
  font: 400 24px/32px Inter, sans-serif;
  color: #000;
}
.face { width: 198px; }
.size { width: 108px; }
.case { font: 400 26px/32px "Noto Sans", sans-serif; }
.bold { font: 700 26px/32px "Noto Sans", sans-serif; }
.italic { font: italic 400 27px/32px "Liberation Serif", serif; }
.underline { font: 400 25px/32px "Noto Sans", sans-serif; text-decoration: underline; text-underline-offset: 4px; text-decoration-thickness: 2px; }
.strike { font: 400 24px/32px "Noto Sans", sans-serif; text-decoration: line-through; }
.script { font: 600 25px/32px "Noto Sans", sans-serif; }
.script sub, .script sup { font-size: 14px; line-height: 14px; color: #3f8acb; }
.script sub { padding-top: 18px; }
.script sup { padding-bottom: 20px; }
.digits { overflow: visible; }
.digits text { font: 700 12px Inter, sans-serif; fill: #3f8acb; }

.styles { flex: 1; padding: 2px 0 0 20px; }
.gallery {
  display: flex;
  flex: 1;
  align-items: flex-start;
  gap: 20px;
  height: 116px;
  padding: 10px 10px 0 44px;
  border: 2px solid #c4c4c4;
  border-radius: 6px;
  background: #fff;
}
.style {
  flex-direction: column;
  align-items: stretch;
  width: 140px;
  height: 93px;
  border: 1px solid #d0d0d0;
  border-radius: 4px;
  background: linear-gradient(#fff, #f8f8f8);
  overflow: hidden;
  color: #000;
}
.selected { box-shadow: 0 0 0 7px #dfe5f2, 0 0 0 9px #7b96cb; }
.sample {
  flex: 1;
  margin: 0 5px;
  font: 500 19px/62px "Open Sans", sans-serif;
  text-align: center;
  overflow: hidden;
}
.name {
  height: 31px;
  border-top: 1px solid #e2e2e2;
  background: #eeeeee;
  font-size: 18px;
  line-height: 28px;
  font-weight: 500;
}
.h1, .h2, .title, .subtitle { text-align: left; font-weight: 400; }
.h1 { font-size: 28px; color: #3f74b8; }
.h2 { font-size: 22px; color: #3f74b8; }
.title { font-size: 50px; line-height: 58px; }
.subtitle { font-size: 19px; color: #5a5a5a; letter-spacing: 2px; }
.next { margin: 41px 0 0 auto; }
.pane { width: 80px; margin-right: 17px; padding-top: 8px; }
.dictate { width: 124px; justify-content: center; }
.editor { width: 214px; padding-left: 24px; }

/* Document */
.workspace { flex: 1; display: flex; justify-content: center; align-items: flex-start; padding: 29px 24px 16px 26px; }
.page {
  width: 100%;
  max-width: 2010px;
  border: 2px solid #c4c4c4;
  box-shadow: 0 4px 18px #0002;
}
.canvas { width: 100%; height: auto; font-family: "Liberation Sans", Arial, sans-serif; }
.heading { font-size: 72px; font-weight: 700; }
.category { font-size: 26px; font-weight: 700; text-anchor: middle; }
.entry { font-size: 24px; fill: #a6a6a6; text-anchor: middle; }
.brand { font-size: 44px; font-weight: 700; fill: #424242; }
.tiny { font: 700 10px "Open Sans", sans-serif; }

/* Status bar */
.status {
  position: relative;
  display: flex;
  align-items: center;
  height: 46px;
  padding: 0 50px 0 48px;
  gap: 40px;
  border-top: 2px solid #9c9c9c;
  background: linear-gradient(#e3e3e3, #d6d6d6);
  font-size: 24px;
  color: #4a4a4a;
}
.views { display: flex; align-items: center; align-self: stretch; margin-left: auto; font-size: 23px; }
.focus { gap: 13px; margin-right: 22px; }
.view { width: 72px; }
.on { align-self: stretch; margin-top: -4px; background: #a6a6a6; }
.zoom { display: flex; align-items: center; gap: 13px; margin-left: 15px; }
.percent { margin-left: 34px; }
input[type="range"] { appearance: none; width: 200px; height: 32px; margin: 0; background: none; }
input[type="range"]::-webkit-slider-runnable-track { height: 8px; border-radius: 4px; background: #9a9a9a; }
input[type="range"]::-webkit-slider-thumb {
  appearance: none;
  width: 32px;
  height: 32px;
  margin-top: -12px;
  border-radius: 50%;
  background: #fff;
  box-shadow: 0 1px 4px #0006;
}
```
